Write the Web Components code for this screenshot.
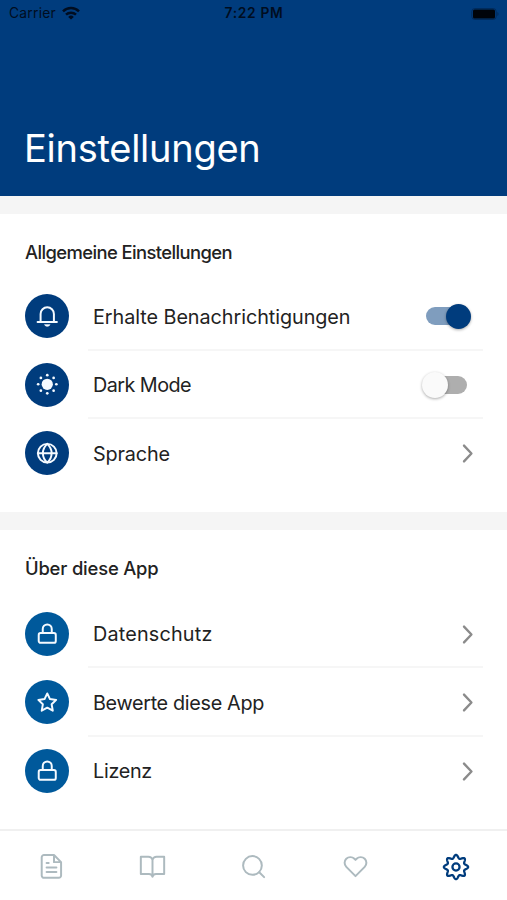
<!DOCTYPE html>
<html lang="de"><head><meta charset="utf-8"><title>Einstellungen</title>
<style>
body{margin:0;background:#fff;font-family:Inter,"Noto Sans",sans-serif;color:#202020}
</style></head><body>
<settings-app></settings-app>
<script>
const define=(name,html,init)=>{
  const t=document.createElement('template');t.innerHTML=html;
  customElements.define(name,class extends HTMLElement{
    constructor(){super();this.attachShadow({mode:'open'}).append(t.content.cloneNode(true));}
    connectedCallback(){if(init)init(this,this.shadowRoot);}
  });
};

// 24-unit line icons
const ICONS={
  bell:'<path d="M1.700 18.200h20.600M4.900 18V9.600a7.100 7.100 0 0 1 14.200 0V18"/><path d="M9.300 21.300a2.800 1.900 0 0 0 5.400 0z" fill="currentColor" stroke-width=".8"/>',
  sun:'<g fill="currentColor" stroke="none"><circle cx="12" cy="12" r="6"/><circle cx="12" cy="2.300" r="1.450"/><circle cx="12" cy="21.700" r="1.450"/><circle cx="2.300" cy="12" r="1.450"/><circle cx="21.700" cy="12" r="1.450"/><circle cx="5.200" cy="5.200" r="1.450"/><circle cx="18.800" cy="5.200" r="1.450"/><circle cx="5.200" cy="18.800" r="1.450"/><circle cx="18.800" cy="18.800" r="1.450"/></g>',
  globe:'<circle cx="12" cy="12" r="10"/><path d="M2 12h20M12 2c-6.200 5.600-6.200 14.400 0 20M12 2c6.200 5.600 6.200 14.400 0 20"/>',
  lock:'<rect x="2.900" y="11.800" width="18.200" height="10.400" rx="2"/><path d="M7.200 11.800V7.400a4.800 4.800 0 0 1 9.600 0v4.400"/>',
  star:'<path d="M12 2.600l2.900 6 6.600.9-4.800 4.700 1.200 6.800-5.900-3.200-5.900 3.200 1.200-6.800-4.800-4.700 6.600-.9z"/>',
  doc:'<path d="M14.400 1H5A2.200 2.200 0 0 0 2.600 3.200v17.400A2.200 2.200 0 0 0 5 22.800h14a2.200 2.200 0 0 0 2.200-2.200V7.800zM14.400 1v6.800h6.800M7.300 8.600h2M7.300 13h9.400M7.300 17.200h9.400"/>',
  book:'<path d="M.8 2.600h7A4.200 4.200 0 0 1 12 5.600a4.200 4.200 0 0 1 4.200-3h7v16.600h-7.700A3.500 3.500 0 0 0 12 21.800a3.500 3.500 0 0 0-3.500-2.600H.8zM12 5.600v16.200"/>',
  search:'<circle cx="11" cy="11" r="9"/><path d="M17.500 17.500L22.200 22.200"/>',
  heart:'<path d="M20.840 4.610a5.500 5.500 0 0 0-7.780 0L12 5.670l-1.060-1.060a5.500 5.500 0 0 0-7.780 7.780L12 21.230l8.840-8.840a5.500 5.500 0 0 0 0-7.780z"/>',
  chevron:'<path d="M8 3l8.500 9L8 21"/>'
};
// Eight rounded lobes around the gear's hub
(()=>{
  let d='';const n=192;
  for(let i=0;i<n;i++){
    const a=i/n*Math.PI*2,r=9.600+1.500*Math.cos(8*a)+.1*Math.cos(16*a);
    d+=(i?'L':'M')+(12+r*Math.sin(a)).toFixed(2)+' '+(12-r*Math.cos(a)).toFixed(2);
  }
  ICONS.gear='<circle cx="12" cy="12" r="3.300"/><path d="'+d+'z"/>';
})();

define('line-icon',`<style>:host{display:block;width:24px;height:24px}svg{display:block;width:100%;height:100%;overflow:visible;fill:none;stroke:currentColor;stroke-width:var(--stroke,2);stroke-linecap:round;stroke-linejoin:round}</style><svg viewBox="0 0 24 24"></svg>`,
  (el,r)=>{r.querySelector('svg').innerHTML=ICONS[el.getAttribute('name')];});

// One-line label tracked to a given measure
define('fit-text',`<style>:host{display:block;white-space:nowrap}span{display:inline-block}</style><span></span>`,
  (el,r)=>{const s=r.querySelector('span');s.textContent=el.getAttribute('text');
    const w=s.getBoundingClientRect().width;
    s.style.letterSpacing=((+el.getAttribute('measure')-w)/s.textContent.length)+'px';});

define('status-bar',`<style>
:host{display:grid;grid-template-columns:1fr auto 1fr;align-items:center;height:28px;padding:0 8px 0 9px;color:#000d20;font-size:13.800px;line-height:1}
.left{display:flex;align-items:center;gap:6px}.time{font-weight:600}
.wifi{width:18px;height:14px;margin-top:-2px}.bat{justify-self:end;width:28px;height:12px;margin-top:-1px}
</style>
<div class="left"><fit-text text="Carrier" measure="47"></fit-text><svg class="wifi" viewBox="0 0 18 14"><g fill="none" stroke="currentColor" stroke-width="2.500"><path d="M1 5.300a11.600 11.600 0 0 1 16 0"/><path d="M4 8.700a7.300 7.300 0 0 1 10 0"/></g><path d="M9 13.600L6.200 10.900a4 4 0 0 1 5.600 0z" fill="currentColor"/></svg></div>
<fit-text class="time" text="7:22 PM" measure="59"></fit-text>
<svg class="bat" viewBox="0 0 28 12"><rect x=".8" y=".5" width="24.400" height="11" rx="3" fill="none" stroke="#002b5c"/><rect x="2" y="1.600" width="22" height="8.800" rx="1.500" fill="#00040a"/><path d="M26.400 4v4c1.500-.5 1.500-3.500 0-4z" fill="#002b5c"/></svg>`);

define('page-header',`<style>:host{display:flex;flex-direction:column;height:196px;background:#003c7d;color:#fff}
.title{margin:auto 0 25px 24px;font-size:38px;line-height:46px}</style>
<status-bar></status-bar><fit-text class="title" text="Einstellungen" measure="236.500"></fit-text>`);

define('settings-section',`<style>:host{display:block;border-top:18px solid #f5f5f5;padding:24px 24px 0 25px;box-sizing:border-box}
.h{font-size:18.400px;font-weight:500;line-height:28px;margin-bottom:var(--title-gap,16px);color:#222}</style><fit-text class="h"></fit-text><slot></slot>`);

define('toggle-switch',`<style>:host{display:flex;align-items:center;width:41px;height:26px}
.track{display:flex;align-items:center;width:41px;height:18px;border-radius:9px;background:#aeaeae}
.knob{flex:none;width:26px;height:26px;border-radius:50%;background:#fafafa;box-shadow:0 1px 3px #0005;margin-left:-4px}
:host([on]) .track{width:43px;background:#7f9dbe}:host([on]) .knob{width:25px;height:25px;background:#003c7d;margin-left:20px}
</style><div class="track"><div class="knob"></div></div>`);

define('settings-row',`<style>
:host{display:flex;height:68.500px;color:#222}
.disc{width:44px;height:44px;margin-top:12px;border-radius:50%;background:var(--disc,#003c7d);color:#fff;display:grid;place-items:center;flex:none}
.disc line-icon{width:22.500px;height:22.500px;--stroke:2.100;color:#f5faff}
.body{flex:1;margin-left:19px;display:flex;align-items:center;justify-content:space-between;border-bottom:2px solid #f6f6f6;box-sizing:border-box;padding:2px 0 0 5px}
:host([last]) .body{border-color:transparent}
.label{font-size:19.800px;line-height:28px;padding-top:1px}
</style><div class="disc"><line-icon></line-icon></div><div class="body"><fit-text class="label"></fit-text><slot></slot></div>`);

define('row-chevron',`<style>:host{display:block;margin:1px 5.500px 0 0;color:#8b8b8b}line-icon{width:21px;height:21px;--stroke:2.700}</style><line-icon name="chevron"></line-icon>`);

define('tab-bar',`<style>:host{display:grid;grid-template-columns:repeat(5,1fr);justify-items:center;height:71px;box-sizing:border-box;border-top:2px solid #f0f0f0;padding:23px 0 0 1px;color:#adbabf;background:#fff}
line-icon{width:25px;height:25px;--stroke:1.900}.active{color:#003c7d;width:26px;height:26px;--stroke:2.100}</style>
<line-icon name="doc"></line-icon><line-icon name="book"></line-icon><line-icon name="search"></line-icon><line-icon name="heart"></line-icon><line-icon class="active" name="gear"></line-icon>`);

customElements.define('settings-app',class extends HTMLElement{
  connectedCallback(){
    const r=this.attachShadow({mode:'open'});
    const row=(text,measure,icon,end,opt='')=>`<settings-row ${opt} data-text="${text}" data-measure="${measure}" data-icon="${icon}">${end}</settings-row>`;
    const go='<row-chevron></row-chevron>';
    const t=document.createElement('template');
    t.innerHTML=`<style>:host{display:flex;flex-direction:column;height:900px;overflow:hidden}
main{flex:1}.one{height:316px}.two{--disc:#00599b;--title-gap:17.500px}
</style><page-header></page-header><main>
<settings-section class="one" data-text="Allgemeine Einstellungen" data-measure="207">${
row('Erhalte Benachrichtigungen',257.5,'bell','<toggle-switch on style="margin-right:16px"></toggle-switch>')}${
row('Dark Mode',98,'sun','<toggle-switch style="margin-right:16px"></toggle-switch>')}${
row('Sprache',77,'globe',go,'last')}</settings-section>
<settings-section class="two" data-text="Über diese App" data-measure="133.5">${
row('Datenschutz',119.5,'lock',go)}${row('Bewerte diese App',171,'star',go)}${row('Lizenz',59,'lock',go,'last')}</settings-section>
</main><tab-bar></tab-bar>`;
    const f=document.importNode(t.content,true);
    // Hand each component's data attributes to its inner parts before they connect
    for(const e of f.querySelectorAll('settings-row,settings-section')){
      const x=e.shadowRoot.querySelector('fit-text');
      x.setAttribute('text',e.dataset.text);x.setAttribute('measure',e.dataset.measure);
      if(e.dataset.icon)e.shadowRoot.querySelector('line-icon').setAttribute('name',e.dataset.icon);
    }
    r.append(f);
  }
});
</script></body></html>
